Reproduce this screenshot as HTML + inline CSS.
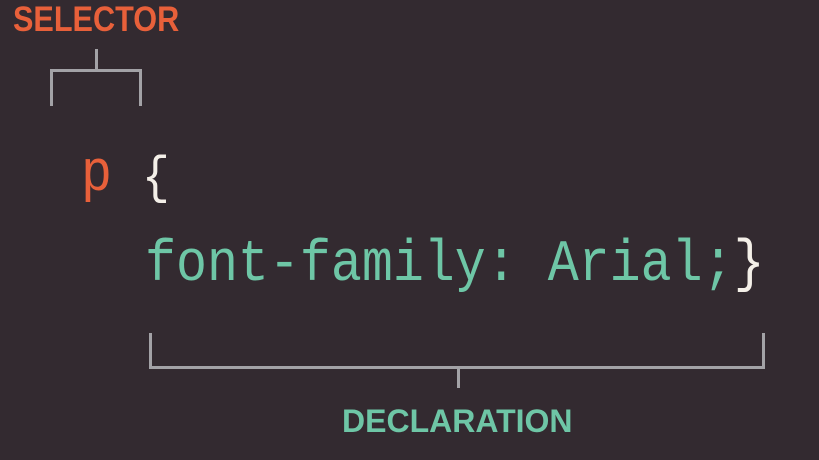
<!DOCTYPE html>
<html><head><style>
html,body{margin:0;padding:0;}
body{width:819px;height:460px;background:#332a30;position:relative;overflow:hidden;}
.t{position:absolute;white-space:pre;line-height:1;}
.mono{font-family:"Liberation Mono",monospace;font-size:58px;transform:scaleX(0.89);transform-origin:0 0;}
.lab{font-family:"Liberation Sans",sans-serif;font-weight:bold;}
.l{position:absolute;background:#a3a2a6;}
</style></head><body>
<div class="t lab" style="left:13px;top:2px;font-size:35px;color:#e8603a;transform:scaleX(0.875);transform-origin:0 0;">SELECTOR</div>
<div class="l" style="left:95px;top:49px;width:3px;height:22px;"></div>
<div class="l" style="left:50px;top:69px;width:92px;height:3px;"></div>
<div class="l" style="left:50px;top:69px;width:3px;height:37px;"></div>
<div class="l" style="left:139px;top:69px;width:3px;height:37px;"></div>
<div class="t mono" style="left:81px;top:147px;color:#e8603a;">p</div>
<div class="t mono" style="left:142px;top:153px;color:#f4efe8;font-size:52px;">{</div>
<div class="t mono" style="left:145px;top:237px;color:#6ec6a6;">font-family: Arial;<span style="color:#f4efe8">}</span></div>
<div class="l" style="left:149px;top:333px;width:3px;height:36px;"></div>
<div class="l" style="left:762px;top:333px;width:3px;height:36px;"></div>
<div class="l" style="left:149px;top:366px;width:616px;height:3px;"></div>
<div class="l" style="left:457px;top:368px;width:3px;height:20px;"></div>
<div class="t lab" style="left:342px;top:405px;font-size:32px;color:#6ec6a6;">DECLARATION</div>
</body></html>
